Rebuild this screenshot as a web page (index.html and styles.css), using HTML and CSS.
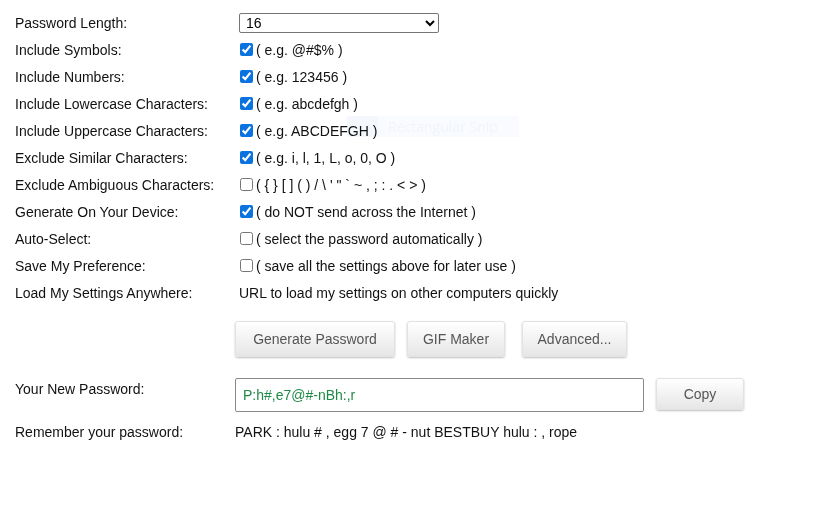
FILE: index.html
```html
<!DOCTYPE html>
<html>
<head>
<meta charset="utf-8">
<link rel="stylesheet" href="styles.css">
</head>
<body>
<div class="page">
  <div class="form">
    <div class="label">Password Length:</div>
    <div class="value"><select class="len"><option>16</option></select></div>

    <div class="label">Include Symbols:</div>
    <div class="value"><input type="checkbox" checked>( e.g. @#$% )</div>

    <div class="label">Include Numbers:</div>
    <div class="value"><input type="checkbox" checked>( e.g. 123456 )</div>

    <div class="label">Include Lowercase Characters:</div>
    <div class="value"><input type="checkbox" checked>( e.g. abcdefgh )</div>

    <div class="label">Include Uppercase Characters:</div>
    <div class="value"><input type="checkbox" checked>( e.g. ABCDEFGH )</div>

    <div class="label">Exclude Similar Characters:</div>
    <div class="value"><input type="checkbox" checked>( e.g. i, l, 1, L, o, 0, O )</div>

    <div class="label">Exclude Ambiguous Characters:</div>
    <div class="value"><input type="checkbox">( { } [ ] ( ) / \ ' " ` ~ , ; : . &lt; &gt; )</div>

    <div class="label">Generate On Your Device:</div>
    <div class="value"><input type="checkbox" checked>( do NOT send across the Internet )</div>

    <div class="label">Auto-Select:</div>
    <div class="value"><input type="checkbox">( select the password automatically )</div>

    <div class="label">Save My Preference:</div>
    <div class="value"><input type="checkbox">( save all the settings above for later use )</div>

    <div class="label">Load My Settings Anywhere:</div>
    <div class="value">URL to load my settings on other computers quickly</div>
  </div>

  <div class="actions">
    <button class="btn gen">Generate Password</button>
    <button class="btn gif">GIF Maker</button>
    <button class="btn adv">Advanced...</button>
  </div>

  <div class="result">
    <div class="rlabel">Your New Password:</div>
    <div class="rvalue">
      <input class="pw" type="text" value="P:h#,e7@#-nBh:,r">
      <button class="btn copy">Copy</button>
    </div>
    <div class="mnemonic-label">Remember your password:</div>
    <div class="mnemonic">PARK : hulu # , egg 7 @ # - nut BESTBUY hulu : , rope</div>
  </div>

  <div class="snip"><span class="snip-icon"></span>Rectangular Snip</div>
</div>
</body>
</html>
```

FILE: styles.css
```css
html, body {
  margin: 0;
  padding: 0;
  background: #fff;
}
body {
  font-family: "Liberation Sans", Arial, sans-serif;
  font-size: 14px;
  color: #111;
}
.page {
  position: relative;
  width: 839px;
  height: 511px;
  padding: 9px 0 0 15px;
  box-sizing: border-box;
}
.form {
  display: grid;
  grid-template-columns: 224px 1fr;
  grid-auto-rows: 27px;
}
.label, .value {
  display: flex;
  align-items: center;
  white-space: nowrap;
}
.label { padding-top: 1px; }
.value input[type=checkbox] {
  width: 13px;
  height: 13px;
  margin: 0 3px 0 1px;
  accent-color: #0b73e0;
}
.len {
  width: 200px;
  height: 20px;
  font-family: "Liberation Sans", Arial, sans-serif;
  font-size: 14px;
  color: #000;
  border: 1px solid #767676;
  border-radius: 2px;
  padding: 0 2px;
  background: #fff;
}
.actions {
  display: flex;
  margin: 15px 0 0 220px;
}
.btn {
  height: 36px;
  padding: 0;
  white-space: nowrap;
  font-family: "Liberation Sans", Arial, sans-serif;
  font-size: 14px;
  color: #555;
  background: linear-gradient(#ffffff, #e6e6e6);
  border: 1px solid #e2e2e2;
  border-radius: 3px;
  box-shadow: 0 1px 2px rgba(0,0,0,0.25);
}
.gen { width: 160px; }
.gif { width: 98px; margin-left: 12px; }
.adv { width: 105px; margin-left: 17px; }
.result {
  display: grid;
  grid-template-columns: 220px 1fr;
  margin-top: 21px;
}
.rlabel {
  padding-top: 3px;
}
.rvalue {
  display: flex;
  gap: 12px;
}
.pw {
  width: 409px;
  height: 34px;
  box-sizing: border-box;
  border: 1px solid #8a8a8a;
  border-radius: 2px;
  padding: 0 7px;
  font-family: "Liberation Sans", Arial, sans-serif;
  font-size: 14px;
  color: #1f8a47;
}
.copy {
  width: 88px;
  height: 32px;
}
.mnemonic-label, .mnemonic {
  margin-top: 12px;
}
.snip {
  position: absolute;
  left: 347px;
  top: 116px;
  width: 172px;
  height: 21px;
  background: #f9fbfe;
  color: #f1f5fb;
  mix-blend-mode: multiply;
  font-family: "Open Sans", sans-serif;
  font-size: 14px;
  display: flex;
  align-items: center;
  gap: 10px;
}
.snip-icon {
  width: 31px;
  height: 21px;
  background: #f4f8fd;
}
```
